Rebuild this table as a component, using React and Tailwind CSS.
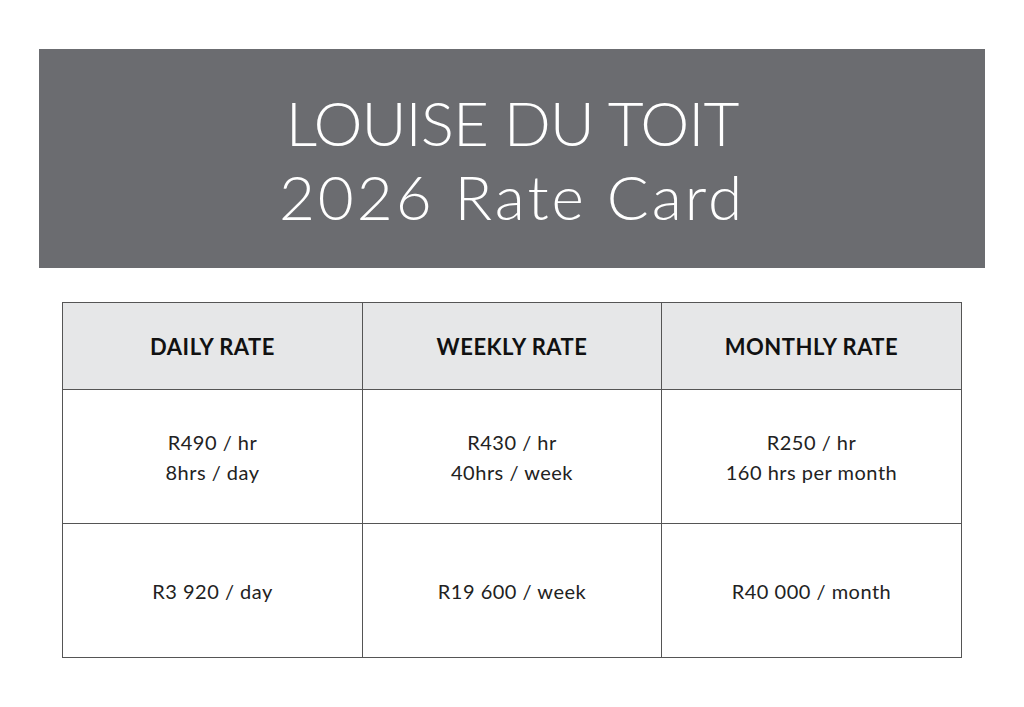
import React from "react";

const font = { fontFamily: "Lato, 'Noto Sans', sans-serif" };

export default function App() {
  const headers = ["DAILY RATE", "WEEKLY RATE", "MONTHLY RATE"];
  const row1 = [
    ["R490 / hr", "8hrs / day"],
    ["R430 / hr", "40hrs / week"],
    ["R250 / hr", "160 hrs per month"],
  ];
  const row2 = ["R3 920 / day", "R19 600 / week", "R40 000 / month"];
  return (
    <div className="w-[1024px] h-[707px] bg-white overflow-hidden" style={font}>
      <div className="pt-[49px] px-[39px]">
        <div className="h-[219px] bg-[#6b6c70] flex flex-col items-center justify-center text-white font-light text-[62px] leading-[74px] pt-[1px]">
          <div className="tracking-[-1px]">LOUISE DU TOIT</div>
          <div className="tracking-[3px]">2026 Rate Card</div>
        </div>
      </div>
      <div className="mt-[34px] mx-[62px] border border-[#555] grid grid-cols-[300px_299px_1fr] text-[#222]">
        {headers.map((h, i) => (
          <div
            key={h}
            className={`h-[87px] bg-[#e6e7e8] flex items-center justify-center font-bold text-[22px] tracking-[0.5px] text-[#111] border-b border-[#555] ${i < 2 ? "border-r" : ""}`}
          >
            {h}
          </div>
        ))}
        {row1.map((lines, i) => (
          <div
            key={i}
            className={`h-[134px] flex flex-col items-center justify-center text-[20px] tracking-[0.5px] leading-[30px] border-b border-[#555] ${i < 2 ? "border-r" : ""}`}
          >
            {lines.map((l) => (
              <div key={l}>{l}</div>
            ))}
          </div>
        ))}
        {row2.map((t, i) => (
          <div
            key={t}
            className={`h-[133px] flex items-center justify-center text-[20px] tracking-[0.5px] border-[#555] ${i < 2 ? "border-r" : ""}`}
          >
            {t}
          </div>
        ))}
      </div>
    </div>
  );
}
